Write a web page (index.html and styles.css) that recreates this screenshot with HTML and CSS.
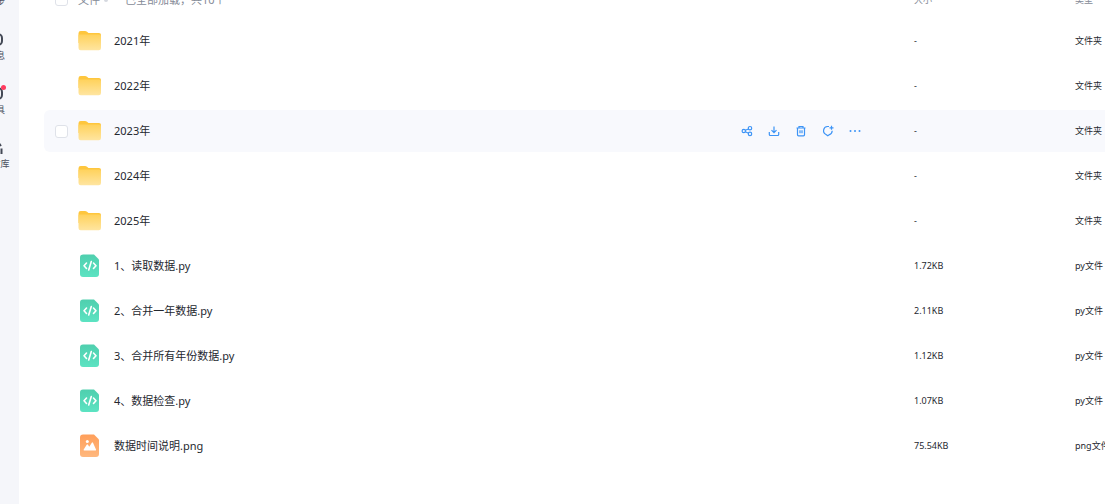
FILE: index.html
```html
<!DOCTYPE html>
<html lang="zh-CN">
  <head>
    <title>文件</title>
    <meta charset="utf-8">
    <link rel="stylesheet" href="styles.css">
  </head>
  <body>
    <svg class="sprite" aria-hidden="true">
      <defs>
        <linearGradient id="folder-fill" x1="0" y1="0" x2="0" y2="1">
          <stop offset="0" stop-color="#ffd25c"/>
          <stop offset="1" stop-color="#ffe5a0"/>
        </linearGradient>
        <linearGradient id="code-fill" x1="0" y1="0" x2="0" y2="1">
          <stop offset="0" stop-color="#4fcfae"/>
          <stop offset="1" stop-color="#5ce3c2"/>
        </linearGradient>
        <linearGradient id="image-fill" x1="0" y1="0" x2="0" y2="1">
          <stop offset="0" stop-color="#ff9f5a"/>
          <stop offset="1" stop-color="#ffb87e"/>
        </linearGradient>
      </defs>
      <symbol id="folder" viewBox="0 0 24 24">
        <path fill="#fec63d" d="M.5 4.200Q.5 2 2.700 2h4.300q1.200 0 2 .7L10.500 4H21q2 0 2 2v8H.5z"/>
        <path fill="url(#folder-fill)" d="M.5 6q0-.5 1-.5H21q2 0 2 1.500v12q0 2.200-2.200 2.200H2.700Q.5 21.200.5 19z"/>
      </symbol>
      <symbol id="code" viewBox="0 0 24 24">
        <path fill="url(#code-fill)" d="M5 .5h11l5 5V20q0 3-3 3H5q-3 0-3-3V3.500q0-3 3-3z"/>
        <path fill="none" stroke="#fff" stroke-width="1.600" stroke-linecap="round" stroke-linejoin="round" d="M8.500 9 6 11.700l2.500 2.800M13.300 7.500l-2.600 8.500M15.500 9l2.500 2.700-2.500 2.800"/>
      </symbol>
      <symbol id="image" viewBox="0 0 24 24">
        <path fill="url(#image-fill)" d="M5 .5h11l5 5V20q0 3-3 3H5q-3 0-3-3V3.500q0-3 3-3z"/>
        <circle cx="9.300" cy="7.500" r="1.500" fill="#fff"/>
        <path fill="#fff" d="M6.200 16.500q-1 0-.5-1l3-4.700q.6-.9 1.200 0l1.400 2 2.500-4q.6-.9 1.200 0l3 6.700q.4 1-.5 1z"/>
      </symbol>
    </svg>

    <nav class="sidebar">
      <a class="nav-item" href="#sync">
        <svg viewBox="0 0 16 16"><rect x="2" y="2" width="12" height="12" rx="3"/></svg>
        <span>同步</span>
      </a>
      <a class="nav-item" href="#message">
        <svg viewBox="0 0 16 16"><rect x="1" y="2" width="13" height="11" rx="4"/></svg>
        <span>消息</span>
      </a>
      <a class="nav-item" href="#tools">
        <svg viewBox="0 0 16 16"><rect x="1" y="2" width="13" height="11" rx="4"/></svg>
        <i class="dot"></i>
        <span>工具</span>
      </a>
      <a class="nav-item" href="#library">
        <svg viewBox="0 0 16 16"><path d="M2 14V2h8l3 4M10.500 8.500V14M13.500 8.500V14"/></svg>
        <span>看文库</span>
      </a>
    </nav>

    <main class="files">
      <table class="file-table">
        <colgroup>
          <col class="col-check">
          <col class="col-name">
          <col class="col-actions">
          <col class="col-size">
          <col class="col-type">
        </colgroup>
        <thead>
          <tr>
            <th class="check"><input type="checkbox" aria-label="全选"></th>
            <th>
              <div class="heading">
                <span>文件</span>
                <i class="sort"></i>
                <span class="summary">已全部加载，共10个</span>
              </div>
            </th>
            <th></th>
            <th class="meta">大小</th>
            <th class="meta">类型</th>
          </tr>
        </thead>
        <tbody>
          <tr>
            <td></td>
            <td><div class="name"><svg><use href="#folder"/></svg><span>2021年</span></div></td>
            <td></td>
            <td class="meta">-</td>
            <td class="meta">文件夹</td>
          </tr>
          <tr>
            <td></td>
            <td><div class="name"><svg><use href="#folder"/></svg><span>2022年</span></div></td>
            <td></td>
            <td class="meta">-</td>
            <td class="meta">文件夹</td>
          </tr>
          <tr class="active">
            <td class="check"><input type="checkbox" aria-label="2023年"></td>
            <td><div class="name"><svg><use href="#folder"/></svg><span>2023年</span></div></td>
            <td>
              <div class="actions">
                <button type="button" aria-label="分享">
                  <svg viewBox="0 0 12 12"><circle cx="2.800" cy="6" r="1.700"/><circle cx="9" cy="3.200" r="1.700"/><circle cx="9" cy="8.900" r="1.700"/><path d="M4.300 5.300 7.500 4M4.300 6.700l3.200 1.500"/></svg>
                </button>
                <button type="button" aria-label="下载">
                  <svg viewBox="0 0 12 12"><path d="M6 1.500v6M3.500 5.200 6 7.700l2.500-2.500M1.300 7v2.500q0 1 1 1h7.400q1 0 1-1V7"/></svg>
                </button>
                <button type="button" aria-label="删除">
                  <svg viewBox="0 0 12 12"><path d="M1.500 3h9M4 3V1.500h4V3M2.500 3v6.800q0 1 1 1h5q1 0 1-1V3M5 5.300v3M7 5.300v3"/></svg>
                </button>
                <button type="button" aria-label="转发">
                  <svg viewBox="0 0 12 12"><path d="M7 1.500H5.500a4.200 4.200 0 0 0-1.500 8l1.800 1.300L7.500 9.600a4.200 4.200 0 0 0 2.700-3.800M9.500.8v4M7.500 2.800h4"/></svg>
                </button>
                <button type="button" aria-label="更多">
                  <svg class="solid" viewBox="0 0 12 12"><circle cx="1.500" cy="6" r="1"/><circle cx="6" cy="6" r="1"/><circle cx="10.500" cy="6" r="1"/></svg>
                </button>
              </div>
            </td>
            <td class="meta">-</td>
            <td class="meta">文件夹</td>
          </tr>
          <tr>
            <td></td>
            <td><div class="name"><svg><use href="#folder"/></svg><span>2024年</span></div></td>
            <td></td>
            <td class="meta">-</td>
            <td class="meta">文件夹</td>
          </tr>
          <tr>
            <td></td>
            <td><div class="name"><svg><use href="#folder"/></svg><span>2025年</span></div></td>
            <td></td>
            <td class="meta">-</td>
            <td class="meta">文件夹</td>
          </tr>
          <tr>
            <td></td>
            <td><div class="name"><svg><use href="#code"/></svg><span>1、读取数据.py</span></div></td>
            <td></td>
            <td class="meta">1.72KB</td>
            <td class="meta">py文件</td>
          </tr>
          <tr>
            <td></td>
            <td><div class="name"><svg><use href="#code"/></svg><span>2、合并一年数据.py</span></div></td>
            <td></td>
            <td class="meta">2.11KB</td>
            <td class="meta">py文件</td>
          </tr>
          <tr>
            <td></td>
            <td><div class="name"><svg><use href="#code"/></svg><span>3、合并所有年份数据.py</span></div></td>
            <td></td>
            <td class="meta">1.12KB</td>
            <td class="meta">py文件</td>
          </tr>
          <tr>
            <td></td>
            <td><div class="name"><svg><use href="#code"/></svg><span>4、数据检查.py</span></div></td>
            <td></td>
            <td class="meta">1.07KB</td>
            <td class="meta">py文件</td>
          </tr>
          <tr>
            <td></td>
            <td><div class="name"><svg><use href="#image"/></svg><span>数据时间说明.png</span></div></td>
            <td></td>
            <td class="meta">75.54KB</td>
            <td class="meta">png文件</td>
          </tr>
        </tbody>
      </table>
    </main>
  </body>
</html>
```
FILE: styles.css
```css
* {
  box-sizing: border-box;
}

body {
  display: flex;
  min-height: 100vh;
  margin: 0;
  overflow: hidden;
  background: #fff;
  color: #25282f;
  font: 11px/16px "Noto Sans", "Noto Sans CJK SC", sans-serif;
}

.sprite {
  position: absolute;
  width: 0;
  height: 0;
}

.sidebar {
  display: flex;
  flex-direction: column;
  flex: none;
  gap: 24px;
  width: 46px;
  margin-left: -27px;
  margin-top: -22px;
  background: #f5f6fa;
}

.nav-item {
  position: relative;
  display: flex;
  flex-direction: column;
  align-items: center;
  gap: 2px;
  color: #4a5060;
  font-size: 9px;
  line-height: 12px;
  text-decoration: none;
  white-space: nowrap;
}

.nav-item svg {
  width: 16px;
  height: 16px;
  fill: none;
  stroke: #444956;
  stroke-width: 2;
}

.dot {
  position: absolute;
  top: -1px;
  right: 13px;
  width: 5px;
  height: 5px;
  border-radius: 50%;
  background: #ff3b5f;
}

.files {
  flex: 1;
  min-width: 0;
  padding-left: 25px;
  overflow: hidden;
}

.file-table {
  width: 100%;
  margin-top: -22px;
  table-layout: fixed;
  border-spacing: 0 3px;
}

.col-check {
  width: 34px;
}

.col-actions {
  width: 173px;
}

.col-size {
  width: 161px;
}

.col-type {
  width: 30px;
}

th,
td {
  height: 42px;
  padding: 0;
  font-weight: 400;
  text-align: left;
  white-space: nowrap;
}

th {
  height: 36px;
  padding-top: 2px;
  color: #868b98;
}

.meta {
  font-size: 9px;
}

.check {
  padding: 0 0 0 11px;
}

.check input {
  display: block;
  width: 13px;
  height: 13px;
  margin: 0;
  appearance: none;
  border: 1px solid #dfe2e9;
  border-radius: 3px;
  background: #fff;
}

.heading {
  display: flex;
  align-items: center;
}

.sort {
  width: 4px;
  height: 4px;
  margin-left: 4px;
  border-radius: 50%;
  background: #d5d8df;
}

.summary {
  margin-left: 17px;
}

.name {
  display: flex;
  align-items: center;
  gap: 12px;
}

.name svg {
  width: 24px;
  height: 24px;
}

.active td {
  background: #f8f9fd;
}

.active td:first-child {
  border-radius: 6px 0 0 6px;
}

.actions {
  display: flex;
  gap: 15px;
}

.actions button {
  display: block;
  width: 12px;
  height: 12px;
  padding: 0;
  border: 0;
  background: none;
}

.actions svg {
  display: block;
  width: 12px;
  height: 12px;
  fill: none;
  stroke: #3d94f6;
  stroke-width: 1.2;
}

.actions .solid {
  fill: #3d94f6;
  stroke: none;
}
```
